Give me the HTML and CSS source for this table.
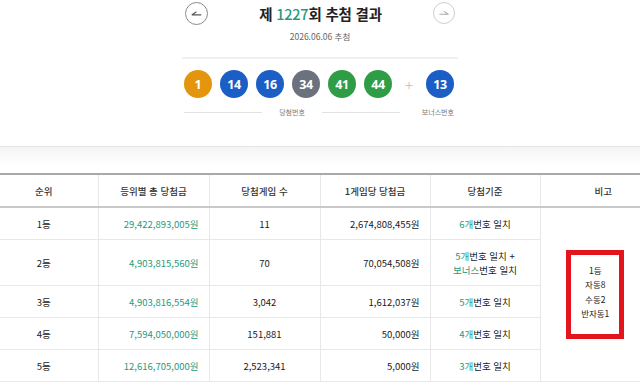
FILE: index.html
```html
<!DOCTYPE html>
<html lang="ko">
<head>
  <meta charset="UTF-8">
  <meta name="viewport" content="width=device-width, initial-scale=1.0">
  <title>당첨결과</title>
  <link rel="stylesheet" href="styles.css">
</head>
<body>
  <section class="draw">
    <div class="draw-head">
      <button class="nav prev" type="button" aria-label="이전 회차">
        <svg viewBox="0 0 24 24" width="23" height="23"><path d="M7 13.5h10M7 13.5l4.5-3.2" /></svg>
      </button>
      <h2 class="draw-title">제 <strong>1227</strong>회 추첨 결과</h2>
      <button class="nav next" type="button" aria-label="다음 회차">
        <svg viewBox="0 0 24 24" width="22" height="22"><path d="M7 13.5h10M17 13.5l-4.5-3.2" /></svg>
      </button>
    </div>
    <p class="draw-date">2026.06.06 추첨</p>

    <div class="ball-box">
      <div class="ball-row">
        <div class="win">
          <span class="ball yellow">1</span>
          <span class="ball blue">14</span>
          <span class="ball blue">16</span>
          <span class="ball gray">34</span>
          <span class="ball green">41</span>
          <span class="ball green">44</span>
        </div>
        <span class="plus">+</span>
        <span class="ball blue">13</span>
      </div>
      <div class="label-row">
        <span class="win-label">당첨번호</span>
        <span class="bonus-label">보너스번호</span>
      </div>
    </div>
  </section>

  <div class="band"></div>

  <div class="table-wrap">
    <table class="prize">
      <colgroup>
        <col class="c-rank">
        <col class="c-total">
        <col class="c-count">
        <col class="c-each">
        <col class="c-rule">
        <col class="c-note">
      </colgroup>
      <thead>
        <tr>
          <th>순위</th>
          <th>등위별 총 당첨금</th>
          <th>당첨게임 수</th>
          <th>1게임당 당첨금</th>
          <th>당첨기준</th>
          <th>비고</th>
        </tr>
      </thead>
      <tbody>
        <tr>
          <td>1등</td>
          <td class="money green-txt">29,422,893,005원</td>
          <td>11</td>
          <td class="money">2,674,808,455원</td>
          <td><em>6개</em>번호 일치</td>
          <td class="note" rowspan="5">
            <div class="note-box">
              <p>1등</p>
              <p>자동8</p>
              <p>수동2</p>
              <p>반자동1</p>
            </div>
          </td>
        </tr>
        <tr class="tall">
          <td>2등</td>
          <td class="money green-txt">4,903,815,560원</td>
          <td>70</td>
          <td class="money">70,054,508원</td>
          <td><em>5개</em>번호 일치 +<br><em>보너스</em>번호 일치</td>
        </tr>
        <tr>
          <td>3등</td>
          <td class="money green-txt">4,903,816,554원</td>
          <td>3,042</td>
          <td class="money">1,612,037원</td>
          <td><em>5개</em>번호 일치</td>
        </tr>
        <tr>
          <td>4등</td>
          <td class="money green-txt">7,594,050,000원</td>
          <td>151,881</td>
          <td class="money">50,000원</td>
          <td><em>4개</em>번호 일치</td>
        </tr>
        <tr>
          <td>5등</td>
          <td class="money green-txt">12,616,705,000원</td>
          <td>2,523,341</td>
          <td class="money">5,000원</td>
          <td><em>3개</em>번호 일치</td>
        </tr>
      </tbody>
    </table>
  </div>
</body>
</html>
```

FILE: styles.css
```css
body {
  margin: 0;
  overflow: hidden;
  background: #fff;
  color: #1a1a1a;
  font-family: "Noto Sans CJK KR", "Noto Sans", sans-serif;
}

/* draw header */

.draw {
  display: flex;
  flex-direction: column;
  align-items: center;
}

.draw-head {
  width: 270px;
  height: 26px;
  display: flex;
  align-items: center;
  justify-content: space-between;
}

.nav {
  width: 23px;
  height: 23px;
  padding: 0;
  border: 1px solid #8a8a8a;
  border-radius: 50%;
  background: #fff;
  display: flex;
  align-items: center;
  justify-content: center;
}

.nav svg {
  fill: none;
  stroke: #555;
  stroke-width: 1.3;
  stroke-linecap: round;
}

.nav.next {
  width: 22px;
  height: 22px;
  border-color: #cfcfcf;
}

.nav.next svg {
  stroke: #aaa;
}

.draw-title {
  margin: 0;
  font-size: 14.5px;
  font-weight: 700;
  color: #222;
  letter-spacing: -0.2px;
}

.draw-title strong {
  font-weight: 500;
  color: #1f9a7e;
}

.draw-date {
  margin: 4px 0 0;
  font-size: 8.5px;
  line-height: 12px;
  color: #666;
}

/* balls */

.ball-box {
  width: 272px;
  margin-top: 15px;
  padding: 11px 2px 0;
  border-top: 2px solid #f0f0f0;
}

.ball-row {
  display: flex;
  align-items: center;
  width: 270px;
}

.win {
  display: flex;
  gap: 8px;
}

.ball {
  width: 28px;
  height: 28px;
  border-radius: 50%;
  display: flex;
  align-items: center;
  justify-content: center;
  color: #fff;
  font-family: "Noto Sans", sans-serif;
  font-weight: 700;
  font-size: 12.5px;
  letter-spacing: -0.3px;
}

.ball.yellow { background: #e3960d; }
.ball.blue { background: #1a5ec6; }
.ball.gray { background: #6c717e; }
.ball.green { background: #2f9c46; }

.plus {
  width: 34px;
  text-align: center;
  font-size: 15px;
  font-weight: 300;
  color: #bbb;
}

.label-row {
  display: flex;
  align-items: center;
  width: 270px;
  margin-top: 9px;
  font-size: 7px;
  line-height: 10px;
  color: #777;
}

.win-label {
  width: 216px;
  display: flex;
  align-items: center;
  gap: 17px;
}

.win-label::before,
.win-label::after {
  content: "";
  flex: 1;
  height: 1px;
  background: #e2e2e2;
}

.bonus-label {
  flex: 1;
  text-align: right;
}

/* band + table */

.band {
  height: 26px;
  margin-top: 29px;
  border-top: 1px solid #e4e4e4;
  background: linear-gradient(#f4f4f4, #fff 70%);
}

.table-wrap {
  overflow: hidden;
}

.prize {
  width: 676px;
  margin-left: -10px;
  table-layout: fixed;
  border-collapse: collapse;
  border-top: 2px solid #a9a9a9;
  font-size: 9.5px;
}

.c-rank { width: 108px; }
.c-total { width: 111px; }
.c-count { width: 111px; }
.c-each { width: 110px; }
.c-rule { width: 110px; }
.c-note { width: 126px; }

.prize th {
  height: 31px;
  padding: 0;
  font-weight: 500;
  color: #333;
  border-left: 1px solid #e6e6e6;
  border-bottom: 2px solid #c9c9c9;
}

.prize td {
  height: 31px;
  padding: 0 10px;
  text-align: center;
  line-height: 14px;
  border-left: 1px solid #e8e8e8;
  border-bottom: 1px solid #e8e8e8;
}

.prize th:first-child,
.prize td:first-child {
  border-left: 0;
}

.prize tr.tall td {
  height: 45px;
}

.prize td.money {
  text-align: right;
}

.green-txt,
.prize em {
  font-style: normal;
  color: #1f9a7e;
}

.prize td.note {
  padding: 0 16px 0 0;
}

.note-box {
  display: inline-block;
  width: 48px;
  padding: 8px 0 14px;
  border: 5px solid #e3141c;
  font-size: 8.5px;
  line-height: 14.3px;
  color: #222;
}

.note-box p {
  margin: 0;
}
```
